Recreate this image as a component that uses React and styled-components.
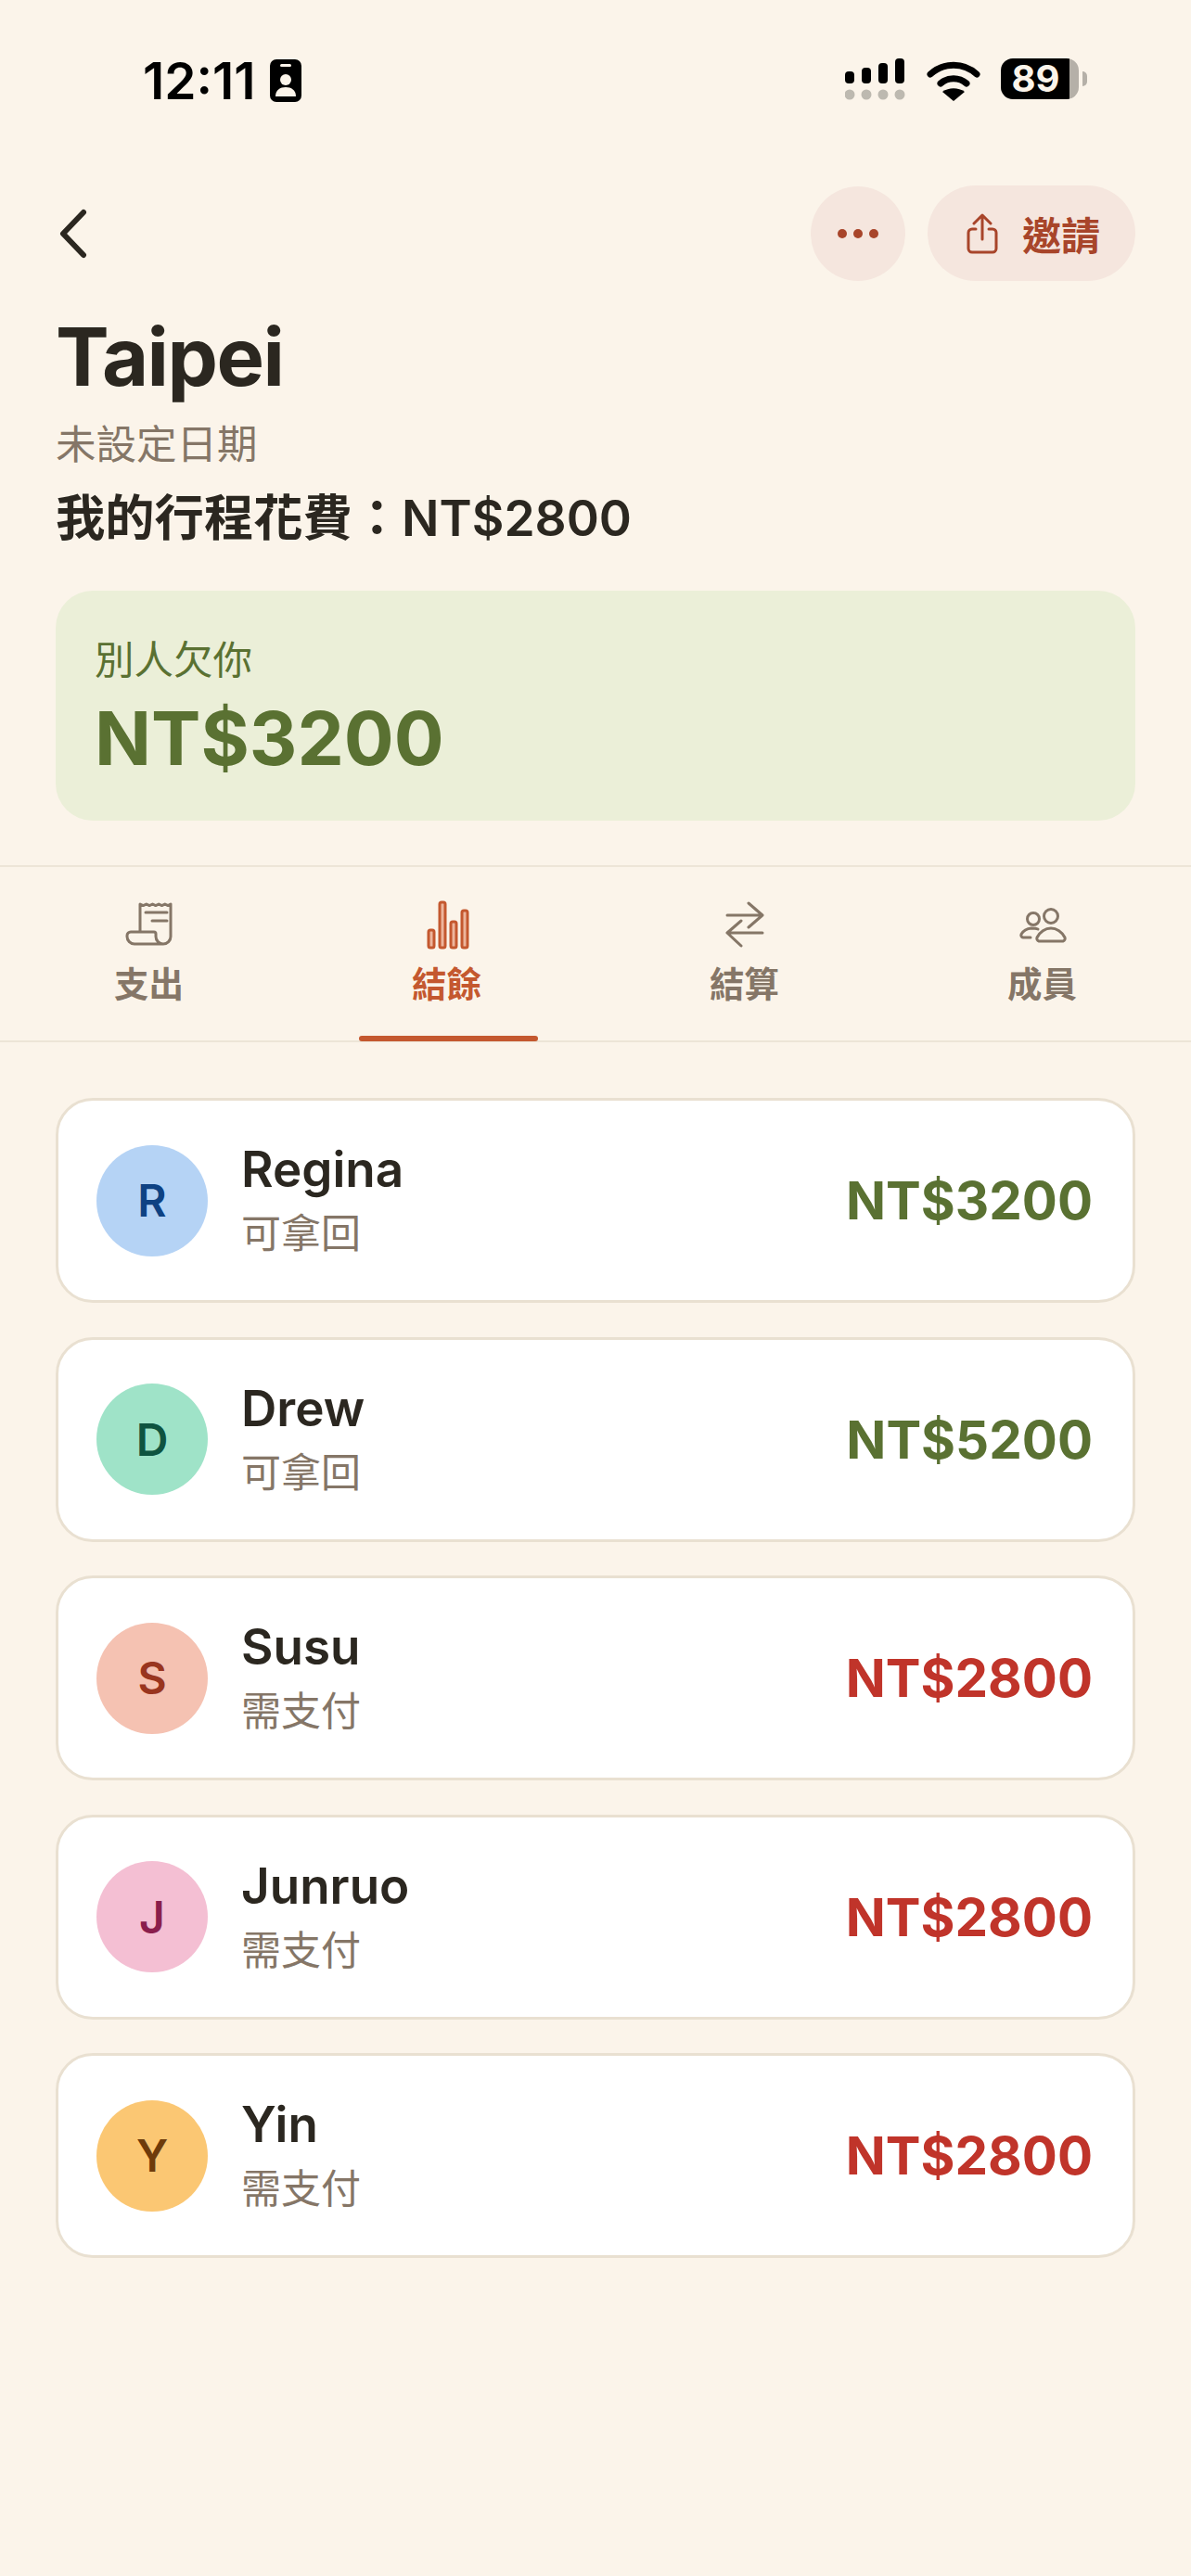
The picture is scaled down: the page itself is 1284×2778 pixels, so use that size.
import React from 'react';
import styled, { createGlobalStyle } from 'styled-components';

const FONT = `Inter, "Noto Sans CJK TC", sans-serif`;
const INK = '#2B2720';
const MUTED = '#857667';
const RUST = '#A8452A';
const ORANGE = '#C4582F';
const GREEN = '#5A7132';
const RED = '#C0342A';

const GlobalStyle = createGlobalStyle`
  html, body {
    margin: 0;
    padding: 0;
    background: #FBF4EA;
    font-family: ${FONT};
  }
`;

const Page = styled.div`
  width: 1284px;
  height: 2778px;
  background: #FBF4EA;
  color: ${INK};
  overflow: hidden;
`;

const StatusBar = styled.div`
  height: 200px;
  box-sizing: border-box;
  padding: 63px 112px 0 154px;
  display: flex;
  justify-content: space-between;
  align-items: flex-start;
`;

const StatusLeft = styled.div`
  display: flex;
  align-items: center;
  gap: 15px;
`;

const Clock = styled.span`
  font-size: 55px;
  line-height: 48px;
  font-weight: 600;
  color: #000;
`;

const StatusRight = styled.div`
  display: flex;
  align-items: flex-start;
  gap: 22px;
`;

const Battery = styled.div`
  position: relative;
  width: 84px;
  height: 44px;
  box-sizing: border-box;
  padding-right: 9px;
  border-radius: 13px;
  background: linear-gradient(to right, #000 0 74px, #B5B0A8 74px 84px);
  display: flex;
  align-items: center;
  justify-content: center;
  color: #FBF4EA;
  font-size: 40px;
  line-height: 44px;
  font-weight: 700;
  margin-right: 9px;

  &::after {
    content: '';
    position: absolute;
    right: -9px;
    top: 14px;
    width: 5px;
    height: 16px;
    border-radius: 0 8px 8px 0;
    background: #B5B0A8;
  }
`;

const Header = styled.div`
  height: 103px;
  padding: 0 60px 0 62px;
  display: flex;
  align-items: center;
  justify-content: space-between;
`;

const BackIcon = styled.svg`
  display: block;
  width: 34px;
  height: 54px;
`;

const Actions = styled.div`
  display: flex;
  align-items: center;
  gap: 24px;
`;

const RoundButton = styled.div`
  width: 102px;
  height: 102px;
  border-radius: 50%;
  background: #F5E6DE;
  display: flex;
  align-items: center;
  justify-content: center;
  gap: 7px;
`;

const Dot = styled.span`
  width: 10px;
  height: 10px;
  border-radius: 50%;
  background: ${RUST};
`;

const InviteButton = styled.div`
  width: 224px;
  height: 103px;
  box-sizing: border-box;
  padding-left: 42px;
  border-radius: 52px;
  background: #F5E6DE;
  display: flex;
  align-items: center;
  gap: 26px;
  color: ${RUST};
  font-size: 42px;
  font-weight: 600;
`;

const Summary = styled.div`
  padding: 29px 60px 0 60px;
`;

const Title = styled.h1`
  margin: 0;
  font-size: 86.5px;
  line-height: 106px;
  font-weight: 700;
  letter-spacing: -1.5px;
  color: ${INK};
`;

const DateLine = styled.div`
  margin-top: 13px;
  font-size: 43.5px;
  line-height: 56px;
  color: ${MUTED};
`;

const SpendLine = styled.div`
  margin-top: 18px;
  font-size: 53.3px;
  line-height: 68px;
  font-weight: 600;
  color: ${INK};
`;

const BalanceCard = styled.div`
  margin: 44px 60px 0;
  height: 248px;
  box-sizing: border-box;
  padding: 47px 42px 0;
  border-radius: 40px;
  background: #EBEFD8;
  color: ${GREEN};
`;

const BalanceLabel = styled.div`
  font-size: 42.5px;
  line-height: 56px;
`;

const BalanceAmount = styled.div`
  margin-top: 6px;
  font-size: 80px;
  line-height: 100px;
  font-weight: 700;
`;

const Tabs = styled.div`
  margin-top: 48px;
  height: 191px;
  box-sizing: border-box;
  border-top: 2px solid #EDE5D7;
  border-bottom: 2px solid #EDE5D7;
  display: grid;
  grid-template-columns: repeat(4, 1fr);
`;

const Tab = styled.div`
  position: relative;
  padding-top: 34px;
  display: flex;
  flex-direction: column;
  align-items: center;
  color: ${(p) => (p.$active ? ORANGE : MUTED)};
`;

const TabIcon = styled.svg`
  display: block;
  width: 56px;
  height: 56px;
  fill: none;
  stroke: currentColor;
  stroke-width: 3;
  stroke-linecap: round;
  stroke-linejoin: round;
`;

const TabLabel = styled.span`
  margin-top: 12px;
  font-size: 37.5px;
  line-height: 50px;
  font-weight: 600;
`;

const TabMarker = styled.span`
  position: absolute;
  left: 66px;
  bottom: -1px;
  width: 193px;
  height: 6px;
  border-radius: 3px;
  background: ${ORANGE};
`;

const List = styled.div`
  padding: 60px 60px 0;
  display: flex;
  flex-direction: column;
  gap: 36.5px;
`;

const Card = styled.div`
  height: 221px;
  box-sizing: border-box;
  padding: 0 43px 0 41px;
  border: 3px solid #E9E0D1;
  border-radius: 40px;
  background: #fff;
  display: flex;
  align-items: center;
`;

const Avatar = styled.div`
  width: 120px;
  height: 120px;
  border-radius: 50%;
  flex-shrink: 0;
  background: ${(p) => p.$bg};
  color: ${(p) => p.$fg};
  display: flex;
  align-items: center;
  justify-content: center;
  font-size: 48px;
  font-weight: 600;
`;

const Person = styled.div`
  margin-left: 36px;
  padding-bottom: 4px;
  flex: 1;
`;

const Name = styled.div`
  font-size: 53px;
  line-height: 66px;
  font-weight: 600;
  color: ${INK};
`;

const Note = styled.div`
  margin-top: 9px;
  font-size: 43px;
  line-height: 54px;
  color: ${MUTED};
`;

const Amount = styled.div`
  font-size: 56.5px;
  font-weight: 700;
  color: ${(p) => (p.$owed ? RED : GREEN)};
`;

const people = [
  { name: 'Regina', note: '可拿回', amount: 'NT$3200', bg: '#B5D3F5', fg: '#0E4283' },
  { name: 'Drew', note: '可拿回', amount: 'NT$5200', bg: '#9FE3C8', fg: '#0F5440' },
  { name: 'Susu', note: '需支付', amount: 'NT$2800', bg: '#F5C2B2', fg: '#99351F', owed: true },
  { name: 'Junruo', note: '需支付', amount: 'NT$2800', bg: '#F4BFD3', fg: '#8A1E4C', owed: true },
  { name: 'Yin', note: '需支付', amount: 'NT$2800', bg: '#FBC773', fg: '#6E3B0B', owed: true },
];

const ReceiptIcon = () => (
  <TabIcon viewBox="0 0 56 56">
    <path d="M18 36V6l3.4 1.6L24.800 6l3.300 1.600L31.500 6l3.300 1.600L38.200 6l3.300 1.600L44.800 6l3.300 1.600L51 6v35a8 8 0 0 1-8 8H12a8 8 0 0 1-8-8v-1a4 4 0 0 1 4-4h25a2 2 0 0 1 2 2v3a8 8 0 0 0 8 8" />
    <path d="M24 15h23M31 24h16" />
  </TabIcon>
);

const BarsIcon = () => (
  <TabIcon viewBox="0 0 56 56" style={{ fill: '#EDB59C' }}>
    <rect x="8" y="34" width="6" height="19" rx="2" />
    <rect x="20" y="4" width="6" height="49" rx="2" />
    <rect x="32" y="25" width="6" height="28" rx="2" />
    <rect x="44" y="13" width="6" height="40" rx="2" />
  </TabIcon>
);

const SwapIcon = () => (
  <TabIcon viewBox="0 0 56 56">
    <path d="M9 18h38M32 5l15 13-15 13M47 37H9M24 24 9 37l15 14" />
  </TabIcon>
);

const PeopleIcon = () => (
  <TabIcon viewBox="0 0 56 56">
    <circle cx="18" cy="22" r="6.500" />
    <circle cx="37" cy="19" r="7.500" />
    <path d="M24 46h26a3 3 0 0 0 2-4c-3-6-9-10-15-10s-12 4-15 10a3 3 0 0 0 2 4z" />
    <path d="M23 33c-2-1-4-1-7-1-5 .5-9 3-11 6.500a2.500 2.500 0 0 0 2 3.500h8" />
  </TabIcon>
);

export default function App() {
  return (
    <Page>
      <GlobalStyle />
      <StatusBar>
        <StatusLeft>
          <Clock>12:11</Clock>
          <svg width="34" height="46" viewBox="0 0 34 46">
            <rect width="34" height="46" rx="7" fill="#000" />
            <rect x="11" y="5" width="12" height="3" rx="1.500" fill="#FBF4EA" />
            <circle cx="17" cy="22" r="6" fill="#FBF4EA" />
            <path d="M6 40c0-7 5-10 11-10s11 3 11 10z" fill="#FBF4EA" />
          </svg>
        </StatusLeft>
        <StatusRight>
          <svg width="66" height="46" viewBox="0 0 66 46">
            <rect x="0" y="14" width="10" height="13" rx="4" fill="#000" />
            <rect x="18" y="10" width="10" height="17" rx="4" fill="#000" />
            <rect x="36" y="5" width="10" height="22" rx="4" fill="#000" />
            <rect x="54" y="0" width="10" height="27" rx="4" fill="#000" />
            <circle cx="5" cy="39" r="5.500" fill="#BDB9B0" />
            <circle cx="23" cy="39" r="5.500" fill="#BDB9B0" />
            <circle cx="41" cy="39" r="5.500" fill="#BDB9B0" />
            <circle cx="59" cy="39" r="5.500" fill="#BDB9B0" />
          </svg>
          <svg width="58" height="46" viewBox="0 0 58 46">
            <path d="M4 17C18 4 40 4 54 17" fill="none" stroke="#000" strokeWidth="7" strokeLinecap="round" />
            <path d="M15 27c8-7 20-7 28 0" fill="none" stroke="#000" strokeWidth="7" strokeLinecap="round" />
            <path d="M17 36c7-5 17-5 24 0L29 46z" fill="#000" />
          </svg>
          <Battery>89</Battery>
        </StatusRight>
      </StatusBar>

      <Header>
        <BackIcon viewBox="0 0 34 54">
          <path d="M28 4 6 27l22 23" fill="none" stroke={INK} strokeWidth="6" strokeLinecap="round" strokeLinejoin="round" />
        </BackIcon>
        <Actions>
          <RoundButton>
            <Dot />
            <Dot />
            <Dot />
          </RoundButton>
          <InviteButton>
            <svg width="34" height="44" viewBox="0 0 34 44" fill="none" stroke={RUST} strokeWidth="3" strokeLinecap="round" strokeLinejoin="round">
              <path d="M17 28V3M8 11l9-9 9 9" />
              <path d="M10 17H6a4 4 0 0 0-4 4v17a4 4 0 0 0 4 4h22a4 4 0 0 0 4-4V21a4 4 0 0 0-4-4h-4" />
            </svg>
            <span>邀請</span>
          </InviteButton>
        </Actions>
      </Header>

      <Summary>
        <Title>Taipei</Title>
        <DateLine>未設定日期</DateLine>
        <SpendLine>我的行程花費：NT$2800</SpendLine>
      </Summary>

      <BalanceCard>
        <BalanceLabel>別人欠你</BalanceLabel>
        <BalanceAmount>NT$3200</BalanceAmount>
      </BalanceCard>

      <Tabs>
        <Tab>
          <ReceiptIcon />
          <TabLabel>支出</TabLabel>
        </Tab>
        <Tab $active>
          <BarsIcon />
          <TabLabel>結餘</TabLabel>
          <TabMarker />
        </Tab>
        <Tab>
          <SwapIcon />
          <TabLabel>結算</TabLabel>
        </Tab>
        <Tab>
          <PeopleIcon />
          <TabLabel>成員</TabLabel>
        </Tab>
      </Tabs>

      <List>
        {people.map((p) => (
          <Card key={p.name}>
            <Avatar $bg={p.bg} $fg={p.fg}>{p.name[0]}</Avatar>
            <Person>
              <Name>{p.name}</Name>
              <Note>{p.note}</Note>
            </Person>
            <Amount $owed={p.owed}>{p.amount}</Amount>
          </Card>
        ))}
      </List>
    </Page>
  );
}
